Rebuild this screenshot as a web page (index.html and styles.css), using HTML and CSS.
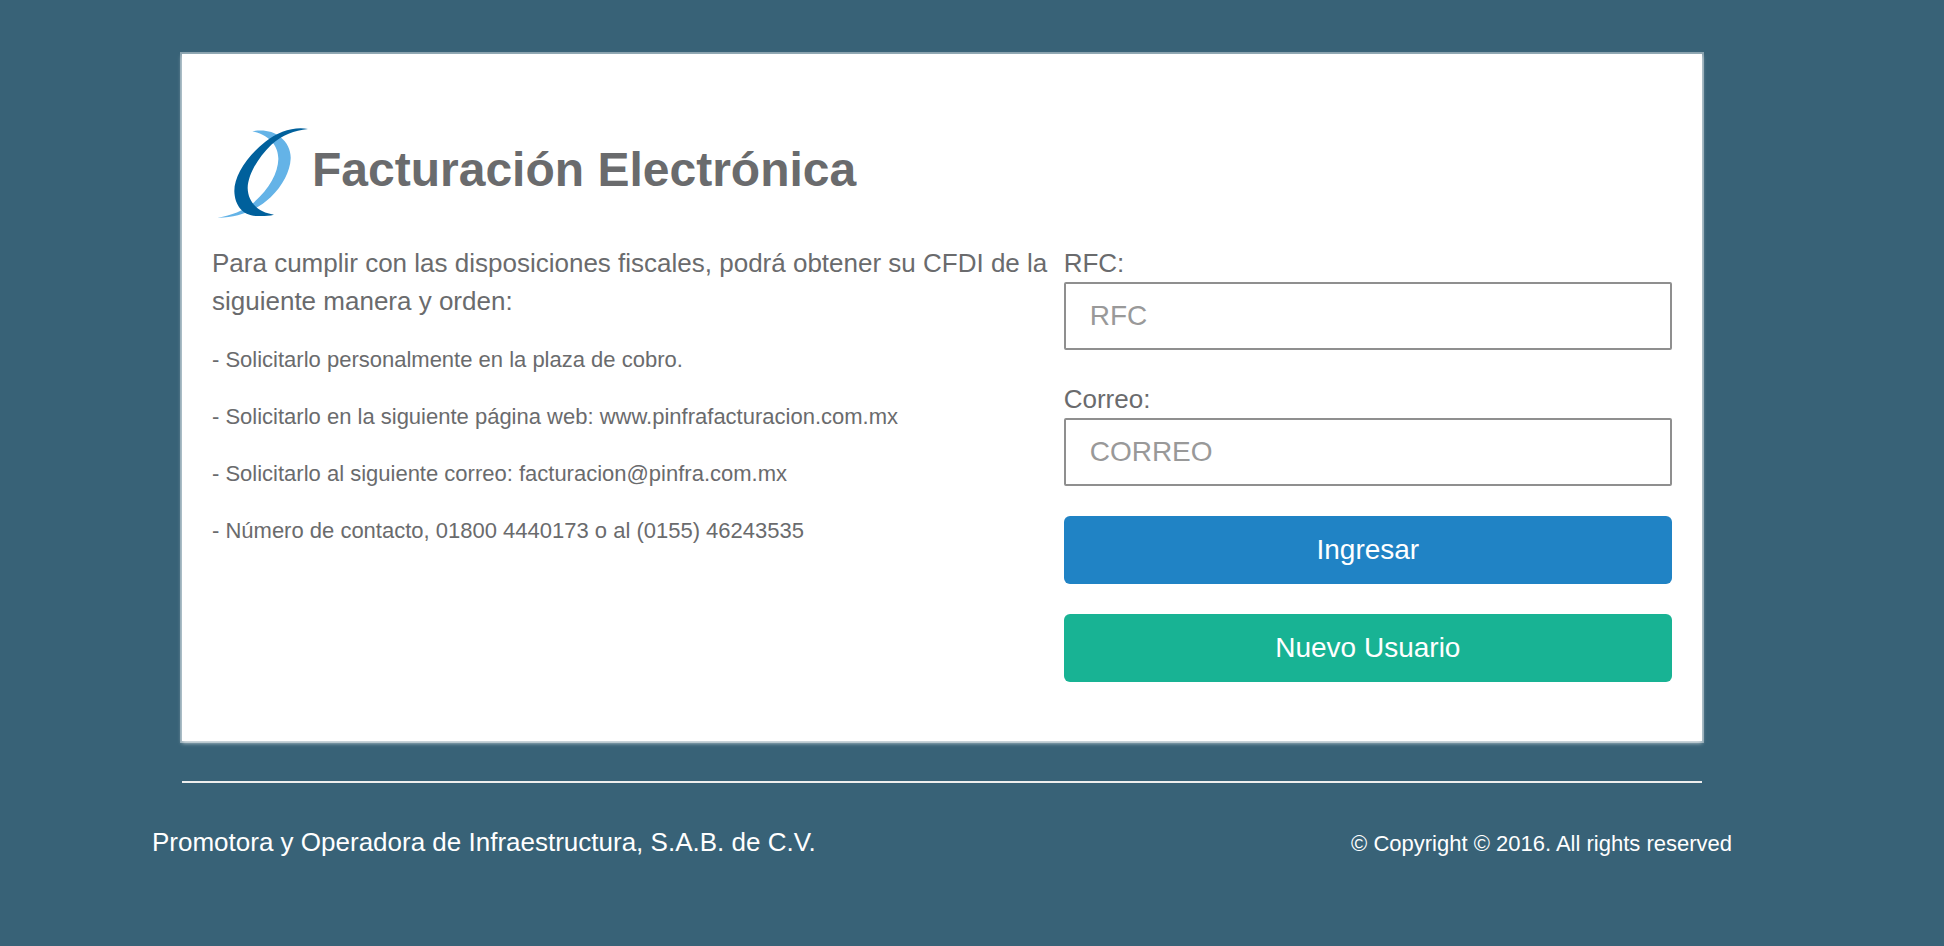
FILE: index.html
```html
<!DOCTYPE html>
<html lang="es">
	<head>
		<meta charset="utf-8">
		<title>Facturación Electrónica</title>
		<link rel="stylesheet" href="styles.css">
	</head>
	<body>

		<div class="container">
			<div class="card">
				<div class="header">
					<svg class="logo" viewBox="6 12 300 300" aria-hidden="true">
						<path fill="#64b3e7" d="M127 34C160 28 190 34 210 50C233 68 243 92 242 116C240 155 218 196 182 232C140 272 80 294 23 293C65 287 101 271 125 253C176 211 204 160 205 118C206 80 182 46 127 34Z"/>
						<path fill="#00609c" d="M294 27C252 19 205 35 166 65C110 110 73 167 73 213C74 256 98 287 141 288C160 289 176 288 192 284C146 278 114 248 113 204C114 163 145 112 184 74C218 45 252 31 294 27Z"/>
					</svg>
					<h2 class="title">Facturación Electrónica</h2>
				</div>

				<div class="row">
					<div class="info">
						<p class="lead">Para cumplir con las disposiciones fiscales, podrá obtener su CFDI de la siguiente manera y orden:</p>
						<p class="small">- Solicitarlo personalmente en la plaza de cobro.</p>
						<p class="small">- Solicitarlo en la siguiente página web: www.pinfrafacturacion.com.mx</p>
						<p class="small">- Solicitarlo al siguiente correo: facturacion@pinfra.com.mx</p>
						<p class="small">- Número de contacto, 01800 4440173 o al (0155) 46243535</p>
					</div>

					<form class="login">
						<div class="form-group">
							<label for="rfc">RFC:</label>
							<input type="text" id="rfc" name="rfc" class="form-control" placeholder="RFC">
						</div>
						<div class="form-group">
							<label for="correo">Correo:</label>
							<input type="email" id="correo" name="correo" class="form-control" placeholder="CORREO">
						</div>
						<button type="submit" class="btn btn-primary">Ingresar</button>
						<button type="button" class="btn btn-success">Nuevo Usuario</button>
					</form>
				</div>
			</div>

			<hr class="line">

			<div class="footer">
				<span>Promotora y Operadora de Infraestructura, S.A.B. de C.V.</span>
				<span class="small">© Copyright © 2016. All rights reserved</span>
			</div>
		</div>

	</body>
</html>
```
FILE: styles.css
```css
*{
	box-sizing: border-box;
}

body{
	margin: 0;
	padding: 54px 60px 0 0;
	background-color: #386277;
	color: #6a6b6d;
	font-family: "Helvetica Neue", "Liberation Sans", Arial, sans-serif;
	font-size: 26px;
	line-height: 38px;
}

.container{
	max-width: 1520px;
	margin: 0 auto;
}

.card{
	padding: 70px 30px 59px;
	background-color: #fff;
	box-shadow: 0 0 0 2px rgba(255,255,255,.4), 0 2px 4px rgba(255,255,255,.7);
}

.header{
	display: flex;
	align-items: center;
	margin-bottom: 20px;
}

.logo{
	width: 100px;
	height: 100px;
}

.title{
	margin: 0 0 8px;
	font-size: 48px;
	line-height: 54px;
}

.row{
	display: grid;
	grid-template-columns: 7fr 5fr;
}

.info p{
	margin: 0 0 19px;
}

.info .lead{
	margin-bottom: 21px;
}

.small{
	font-size: 22px;
}

.login{
	display: flex;
	flex-direction: column;
	gap: 30px;
}

.form-group label{
	display: block;
}

.form-control{
	display: block;
	width: 100%;
	height: 68px;
	padding: 12px 24px;
	border: 2px solid #8f8f8f;
	border-radius: 2px;
	background-color: #fff;
	color: #6a6b6d;
	font-family: inherit;
	font-size: 28px;
}

.form-control::placeholder{
	color: #999;
}

.btn{
	height: 68px;
	border: none;
	border-radius: 6px;
	color: #fff;
	font-family: inherit;
	font-size: 28px;
	cursor: pointer;
}

.btn-primary{
	background-color: #2083c5;
}

.btn-success{
	background-color: #18b394;
}

.line{
	margin: 40px 0;
	border: none;
	border-top: 2px solid #eee;
}

.footer{
	display: flex;
	justify-content: space-between;
	align-items: baseline;
	margin: 0 -30px;
	color: #fff;
}
```
